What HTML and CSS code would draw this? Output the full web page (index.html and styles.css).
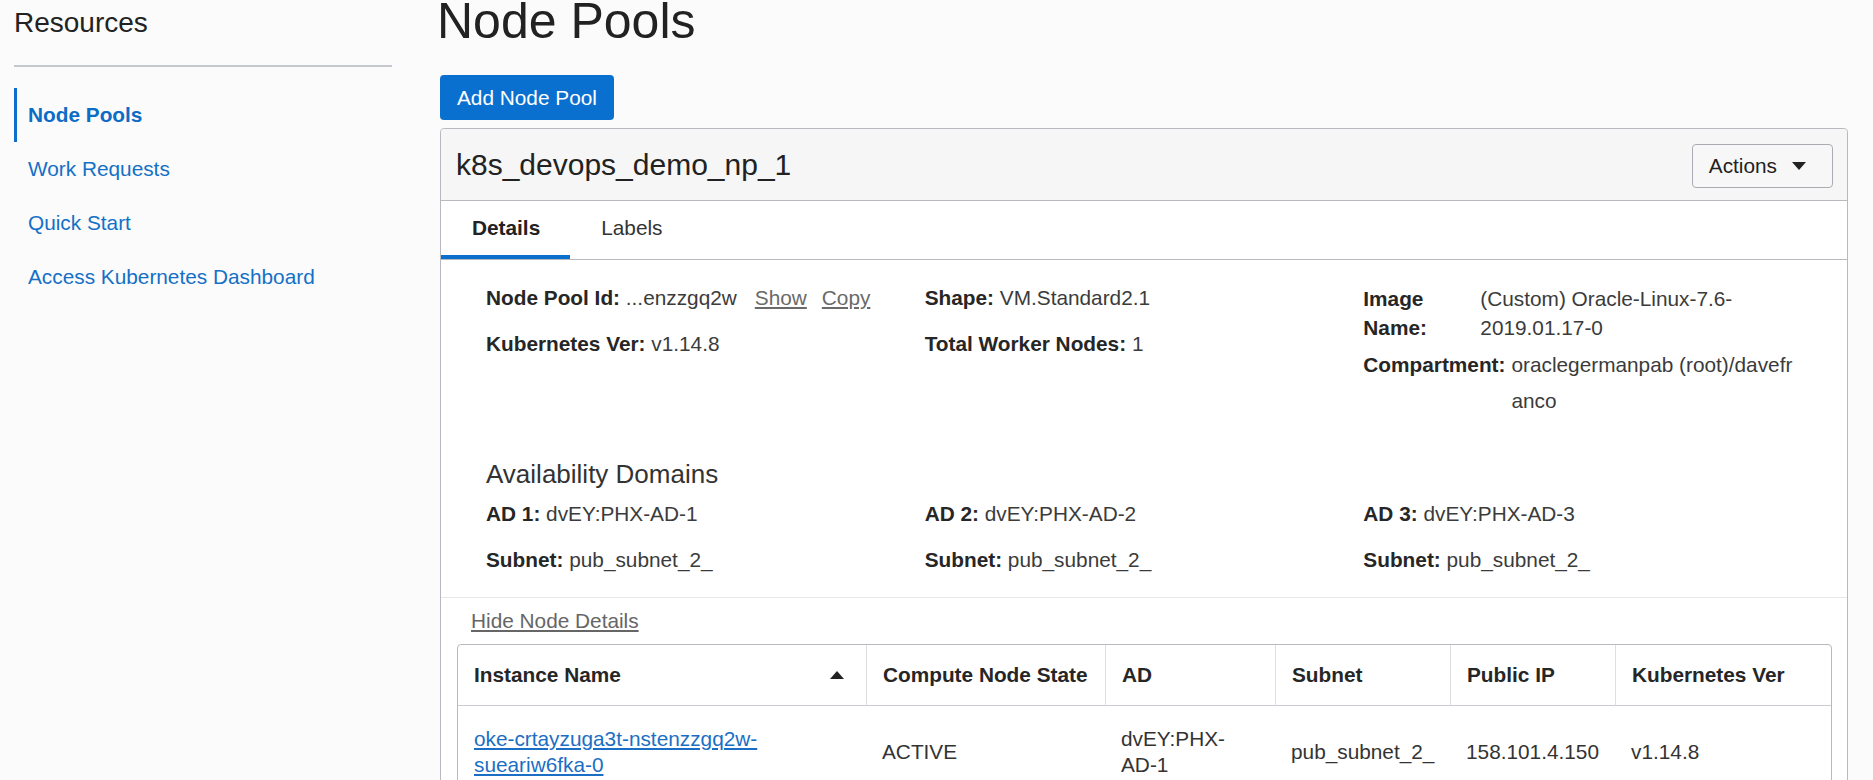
FILE: index.html
```html
<!DOCTYPE html>
<html lang="en">
<head>
<meta charset="utf-8">
<title>Node Pools</title>
<link rel="stylesheet" href="styles.css">
</head>
<body>
<div class="page">
  <aside class="sidebar">
    <h2 class="sidebar-title">Resources</h2>
    <nav class="side-nav">
      <a class="side-link active" href="#">Node Pools</a>
      <a class="side-link" href="#">Work Requests</a>
      <a class="side-link" href="#">Quick Start</a>
      <a class="side-link" href="#">Access Kubernetes Dashboard</a>
    </nav>
  </aside>
  <main class="main">
    <h1 class="page-title">Node Pools</h1>
    <button class="btn-primary">Add Node Pool</button>
    <section class="card">
      <header class="card-header">
        <h2 class="card-title">k8s_devops_demo_np_1</h2>
        <button class="btn-actions">Actions<svg class="caret" width="14" height="8" viewBox="0 0 14 8"><path d="M0 0 L14 0 L7 8 Z"/></svg></button>
      </header>
      <div class="tabs">
        <span class="tab active">Details</span>
        <span class="tab">Labels</span>
      </div>
      <div class="details">
        <div class="info-grid">
          <div class="col">
            <div class="item"><span class="lbl">Node Pool Id:</span> <span class="val">...enzzgq2w</span><a class="sub-link" href="#">Show</a><a class="sub-link" href="#">Copy</a></div>
            <div class="item"><span class="lbl">Kubernetes Ver:</span> <span class="val">v1.14.8</span></div>
          </div>
          <div class="col">
            <div class="item"><span class="lbl">Shape:</span> <span class="val">VM.Standard2.1</span></div>
            <div class="item"><span class="lbl">Total Worker Nodes:</span> <span class="val">1</span></div>
          </div>
          <div class="col">
            <div class="item item-pair"><span class="lbl pair-lbl">Image Name:</span><span class="val pair-val">(Custom) Oracle-Linux-7.6-<wbr>2019.01.17-0</span></div>
            <div class="item item-flex"><span class="lbl">Compartment:</span><span class="val flex-val">oraclegermanpab (root)/davefr<wbr>anco</span></div>
          </div>
        </div>
        <h3 class="ad-title">Availability Domains</h3>
        <div class="info-grid">
          <div class="col">
            <div class="item"><span class="lbl">AD 1:</span> <span class="val">dvEY:PHX-AD-1</span></div>
            <div class="item"><span class="lbl">Subnet:</span> <span class="val">pub_subnet_2_</span></div>
          </div>
          <div class="col">
            <div class="item"><span class="lbl">AD 2:</span> <span class="val">dvEY:PHX-AD-2</span></div>
            <div class="item"><span class="lbl">Subnet:</span> <span class="val">pub_subnet_2_</span></div>
          </div>
          <div class="col">
            <div class="item"><span class="lbl">AD 3:</span> <span class="val">dvEY:PHX-AD-3</span></div>
            <div class="item"><span class="lbl">Subnet:</span> <span class="val">pub_subnet_2_</span></div>
          </div>
        </div>
      </div>
      <div class="node-section">
        <a class="toggle-link" href="#">Hide Node Details</a>
        <table class="node-table">
          <colgroup>
            <col class="c-name"><col class="c-state"><col class="c-ad"><col class="c-subnet"><col class="c-ip"><col class="c-ver">
          </colgroup>
          <thead>
            <tr>
              <th class="th-first"><div class="th-sort"><span>Instance Name</span><svg class="sort-icon" width="14" height="8" viewBox="0 0 14 8"><path d="M0 8 L7 0 L14 8 Z"/></svg></div></th>
              <th>Compute Node State</th>
              <th>AD</th>
              <th>Subnet</th>
              <th>Public IP</th>
              <th>Kubernetes Ver</th>
            </tr>
          </thead>
          <tbody>
            <tr>
              <td><a class="row-link" href="#">oke-crtayzuga3t-nstenzzgq2w-sueariw6fka-0</a></td>
              <td>ACTIVE</td>
              <td>dvEY:PHX-<wbr><span class="nobr">AD-1</span></td>
              <td>pub_subnet_2_</td>
              <td>158.101.4.150</td>
              <td>v1.14.8</td>
            </tr>
          </tbody>
        </table>
      </div>
    </section>
  </main>
</div>
</body>
</html>
```

FILE: styles.css
```css
* { box-sizing: border-box; }

body {
  margin: 0;
  background: #fbfbfb;
  font-family: "Liberation Sans", Arial, sans-serif;
  font-size: 20.8px;
  color: #333;
  overflow: hidden;
}

.page {
  display: flex;
  gap: 48px;
  padding: 0 25px 0 14px;
}

/* Sidebar */
.sidebar {
  width: 378px;
  flex: none;
}

.sidebar-title {
  margin: 0;
  padding: 3px 0 22px 0;
  font-size: 28px;
  line-height: 40px;
  font-weight: normal;
  color: #222;
  border-bottom: 2px solid #c5c8cc;
}

.side-nav {
  margin-top: 21px;
  display: flex;
  flex-direction: column;
}

.side-link {
  display: block;
  height: 54px;
  line-height: 54px;
  padding-left: 11px;
  border-left: 3px solid transparent;
  color: #1470c6;
  text-decoration: none;
}

.side-link.active {
  border-left-color: #0b6fcc;
  font-weight: bold;
  color: #0d6cc6;
}

/* Main */
.main {
  flex: 1;
  min-width: 0;
}

.page-title {
  margin: 0 0 0 -3px;
  font-size: 50px;
  line-height: 42px;
  font-weight: normal;
  color: #222;
}

.btn-primary {
  display: block;
  margin-top: 33px;
  height: 45px;
  padding: 0 17px;
  border: none;
  border-radius: 4px;
  background: #0a70d0;
  color: #fff;
  font-family: inherit;
  font-size: 20.8px;
  line-height: 45px;
}

.card {
  margin-top: 8px;
  border: 1px solid #b6babf;
  border-radius: 4px 4px 0 0;
  background: #fff;
}

.card-header {
  display: flex;
  align-items: center;
  justify-content: space-between;
  height: 72px;
  padding: 0 14px 0 15px;
  background: #f6f6f6;
  border-bottom: 1px solid #b6babf;
  border-radius: 4px 4px 0 0;
}

.card-title {
  margin: 0;
  font-size: 30px;
  line-height: 34px;
  font-weight: normal;
  color: #222;
}

.btn-actions {
  display: flex;
  align-items: center;
  gap: 15px;
  margin-top: 3px;
  height: 44px;
  padding: 0 26px 0 16px;
  border: 1px solid #a9adb2;
  border-radius: 4px;
  background: #f7f7f7;
  color: #222;
  font-family: inherit;
  font-size: 20.8px;
}

.caret { fill: #222; }

.tabs {
  display: flex;
  border-bottom: 1px solid #b6babf;
}

.tab {
  height: 58px;
  line-height: 54px;
  padding: 0 30px 0 31px;
  border-bottom: 4px solid transparent;
  color: #333;
}

.tab.active {
  border-bottom-color: #0b6fcc;
  font-weight: bold;
  color: #222;
}

/* Details */
.details {
  padding: 20px 45px 9px;
  border-bottom: 1px solid #e8e8e8;
}

.info-grid {
  display: grid;
  grid-template-columns: repeat(3, 1fr);
}

.item {
  line-height: 36px;
  margin-bottom: 10px;
}

.lbl {
  font-weight: bold;
  color: #262626;
}

.val { color: #3b3b3b; }

.sub-link {
  margin-left: 18px;
  color: #6a6a6a;
  text-decoration: underline;
}

.sub-link + .sub-link { margin-left: 15px; }

.item-pair {
  display: flex;
  line-height: 29px;
  padding-top: 3.5px;
  margin-bottom: 5px;
}

.pair-lbl {
  width: 117px;
  flex: none;
}

.pair-val { flex: 1; min-width: 0; }

.item-flex {
  display: flex;
  gap: 6px;
}

.flex-val { flex: 1; min-width: 0; }

.ad-title {
  margin: 27.5px 0 4px;
  font-size: 26px;
  line-height: 36px;
  font-weight: normal;
  color: #333;
}

/* Node section */
.node-section {
  padding: 10px 15px 0 16px;
}

.toggle-link {
  display: block;
  width: fit-content;
  margin-left: 14px;
  line-height: 26px;
  color: #666;
  text-decoration: underline;
}

.node-table {
  margin-top: 10px;
  width: 100%;
  table-layout: fixed;
  border-collapse: separate;
  border-spacing: 0;
  border: 1px solid #b6babf;
  border-radius: 4px 4px 0 0;
  background: #fff;
}

.c-name { width: 408px; }
.c-state { width: 239px; }
.c-ad { width: 170px; }
.c-subnet { width: 175px; }
.c-ip { width: 165px; }

.node-table th {
  height: 61px;
  padding: 0 12px 0 16px;
  text-align: left;
  font-weight: bold;
  color: #262626;
  white-space: nowrap;
  border-bottom: 1px solid #c9ccd0;
  border-left: 1px solid #dcdee1;
  vertical-align: middle;
}

.node-table th.th-first {
  border-left: none;
  padding-right: 22px;
}

.th-sort {
  display: flex;
  align-items: center;
  justify-content: space-between;
}

.sort-icon { fill: #222; }

.node-table td {
  padding: 20px 12px 20px 16px;
  line-height: 26px;
  vertical-align: middle;
  color: #333;
}

.nobr { white-space: nowrap; }

.row-link {
  color: #1a6fc4;
  text-decoration: underline;
}
```
